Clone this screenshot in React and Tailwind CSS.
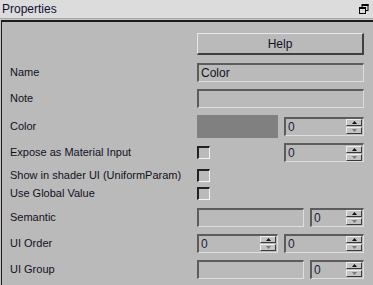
import React from "react";

const font = { fontFamily: '"Liberation Sans", Arial, sans-serif' };

function Field({ w, children }) {
    return (
        <div className={`h-[19px] ${w} border-t-2 border-l-2 border-b border-r border-t-[#5c5c5c] border-l-[#5c5c5c] border-b-[#dedede] border-r-[#dedede] flex items-center pl-[2px] text-[12px] text-[#111122]`}>
            {children}
        </div>
    );
}

function Spinner({ w }) {
    return (
        <div className={`h-[19px] ${w} border-t-2 border-l-2 border-b border-r border-t-[#5c5c5c] border-l-[#5c5c5c] border-b-[#dedede] border-r-[#dedede] flex items-center justify-between pl-[2px] pr-[1px] text-[12px] text-[#1a1a44]`}>
            <span>0</span>
            <div className="flex flex-col gap-[1px]">
                <div className="w-[16px] h-[7px] bg-[#c4c4c4] border-t border-l border-b border-r border-t-[#eeeeee] border-l-[#eeeeee] border-b-[#3a3a3a] border-r-[#3a3a3a] flex items-center justify-center">
                    <svg width="5" height="3" viewBox="0 0 5 3"><path d="M2.5 0 L5 3 L0 3 Z" fill="#111" /></svg>
                </div>
                <div className="w-[16px] h-[7px] bg-[#c4c4c4] border-t border-l border-b border-r border-t-[#eeeeee] border-l-[#eeeeee] border-b-[#3a3a3a] border-r-[#3a3a3a] flex items-center justify-center">
                    <svg width="5" height="3" viewBox="0 0 5 3"><path d="M0 0 L5 0 L2.5 3 Z" fill="#777" /></svg>
                </div>
            </div>
        </div>
    );
}

function Check() {
    return <div className="w-[13px] h-[13px] border-t-2 border-l-2 border-b border-r border-t-[#222] border-l-[#222] border-b-[#f4f4f4] border-r-[#f4f4f4]"></div>;
}

function Row({ label, h, mt, children }) {
    return (
        <div className={`flex items-center ${h} ${mt}`}>
            <div className="w-[187px] text-[11px] text-[#111122] leading-none">{label}</div>
            <div className="flex items-center gap-[6px]">{children}</div>
        </div>
    );
}

export default function App() {
    return (
        <div style={font} className="w-[373px] h-[285px] bg-[#c4c4c4] overflow-hidden">
            <div className="h-[19px] bg-[#dcdcdc] border-b border-[#a8a8a8] flex items-center justify-between px-[2px]">
                <span className="text-[12px] text-[#101030]">Properties</span>
                <svg width="10" height="10" viewBox="0 0 10 10" className="mr-[2px]">
                    <rect x="3" y="0.5" width="6" height="6" fill="none" stroke="#000" strokeWidth="1" />
                    <rect x="3" y="0" width="6.5" height="2" fill="#000" />
                    <rect x="0.5" y="3.5" width="6" height="6" fill="#dcdcdc" stroke="#000" strokeWidth="1" />
                    <rect x="0" y="3" width="7" height="2" fill="#000" />
                </svg>
            </div>
            <div className="mt-[1px] ml-[1px] h-[270px] border-t-2 border-l border-[#1c1c1c] bg-[#bababa] pl-[8px]">
                <div className="flex mt-[11px]">
                    <div className="w-[187px]"></div>
                    <button className="w-[167px] h-[22px] border border-t-[#e8e8e8] border-l-[#e8e8e8] border-b-2 border-r-2 border-b-[#404040] border-r-[#404040] bg-[#bababa] text-[12px] text-[#111122]">Help</button>
                </div>
                <Row label="Name" h="h-[19px]" mt="mt-[8px]">
                    <Field w="w-[167px]">Color</Field>
                </Row>
                <Row label="Note" h="h-[19px]" mt="mt-[7px]">
                    <Field w="w-[167px]"></Field>
                </Row>
                <Row label="Color" h="h-[24px]" mt="mt-[6px]">
                    <div className="w-[81px] h-[23px] bg-[#808080]"></div>
                    <Spinner w="w-[80px]" />
                </Row>
                <Row label="Expose as Material Input" h="h-[19px]" mt="mt-[5px]">
                    <div className="w-[81px]"><Check /></div>
                    <Spinner w="w-[80px]" />
                </Row>
                <Row label="Show in shader UI (UniformParam)" h="h-[13px]" mt="mt-[7px]">
                    <Check />
                </Row>
                <Row label="Use Global Value" h="h-[13px]" mt="mt-[5px]">
                    <Check />
                </Row>
                <Row label="Semantic" h="h-[20px]" mt="mt-[7px]">
                    <Field w="w-[107px]"></Field>
                    <Spinner w="w-[54px]" />
                </Row>
                <Row label="UI Order" h="h-[20px]" mt="mt-[6px]">
                    <Spinner w="w-[81px]" />
                    <Spinner w="w-[80px]" />
                </Row>
                <Row label="UI Group" h="h-[20px]" mt="mt-[6px]">
                    <Field w="w-[107px]"></Field>
                    <Spinner w="w-[54px]" />
                </Row>
            </div>
        </div>
    );
}
